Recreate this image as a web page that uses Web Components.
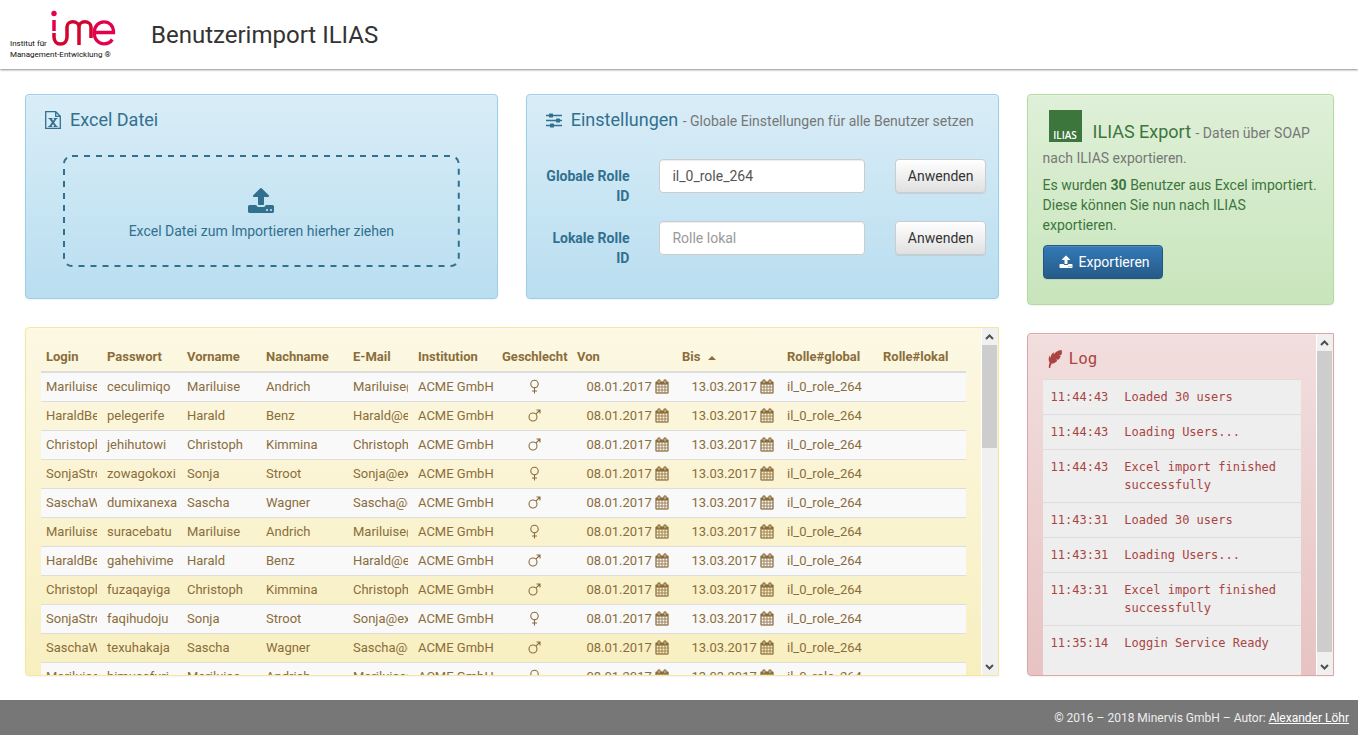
<!DOCTYPE html>
<html lang="de">
<head>
<meta charset="utf-8">
<title>Benutzerimport ILIAS</title>
<style>
html,body{margin:0;height:100%}
body{font:14px/20px Roboto,"Liberation Sans",sans-serif;color:#333;background:#fff}
</style>
</head>
<body>
<import-app></import-app>
<script>
const define = (name, html, setup) => customElements.define(name, class extends HTMLElement {
  constructor() {
    super();
    this.attachShadow({mode: 'open'});
  }
  connectedCallback() {
    if (this._ready) return;
    this._ready = true;
    const tpl = document.createElement('template');
    tpl.innerHTML = '<style>*{box-sizing:border-box}</style>' + (typeof html === 'function' ? html(this) : html);
    this.shadowRoot.append(tpl.content.cloneNode(true));
    if (setup) setup(this, this.shadowRoot);
  }
});

/* Icons */
const stroke = (w, d) => `<path d="${d}" fill="none" stroke="currentColor" stroke-width="${w}"/>`;
const ICONS = {
  upload: ['0 0 1792 1792', '<path d="M1344 1472q0-26-19-45t-45-19-45 19-19 45 19 45 45 19 45-19 19-45zm256 0q0-26-19-45t-45-19-45 19-19 45 19 45 45 19 45-19 19-45zm128-224v320q0 40-28 68t-68 28h-1472q-40 0-68-28t-28-68v-320q0-40 28-68t68-28h427q21 56 70.500 92t110.500 36h256q61 0 110.500-36t70.500-92h427q40 0 68 28t28 68zm-325-648q-17 40-59 40h-256v448q0 26-19 45t-45 19h-256q-26 0-45-19t-19-45v-448h-256q-42 0-59-40-17-39 14-69l448-448q18-19 45-19t45 19l448 448q31 30 14 69z"/>'],
  calendar: ['0 0 1792 1792', '<path d="M192 1664h288v-288h-288v288zm352 0h320v-288h-320v288zm-352-352h288v-320h-288v320zm352 0h320v-320h-320v320zm-352-384h288v-288h-288v288zm736 736h320v-288h-320v288zm-384-736h320v-288h-320v288zm768 736h288v-288h-288v288zm-384-352h320v-320h-320v320zm-352-864v-288q0-13-9.500-22.500t-22.500-9.500h-64q-13 0-22.500 9.500t-9.500 22.500v288q0 13 9.500 22.500t22.500 9.500h64q13 0 22.500-9.500t9.500-22.500zm736 864h288v-320h-288v320zm-384-384h320v-288h-320v288zm384 0h288v-288h-288v288zm32-480v-288q0-13-9.500-22.500t-22.500-9.500h-64q-13 0-22.500 9.500t-9.500 22.500v288q0 13 9.500 22.500t22.500 9.500h64q13 0 22.500-9.500t9.500-22.500zm384-64v1280q0 52-38 90t-90 38h-1408q-52 0-90-38t-38-90v-1280q0-52 38-90t90-38h128v-96q0-66 47-113t113-47h64q66 0 113 47t47 113v96h384v-96q0-66 47-113t113-47h64q66 0 113 47t47 113v96h128q52 0 90 38t38 90z" stroke="currentColor" stroke-width="30"/>'],
  excel: ['0 0 18 20', stroke(1.3, 'M1.700 1.700h10l4.600 4.600v12h-14.600zM11.700 1.700v4.600h4.600') + '<path d="M4.500 8h4v1h-.6l1.200 1.900L10.300 9H9.700V8h3.800v1h-.9l-2.500 3.400 2.600 3.600h.9v1H9.700v-1h.7L9 13.900 7.600 16h.6v1H4.300v-1h.9l2.700-3.600L5.400 9h-.9z"/>'],
  sliders: ['0 0 18 18', stroke(1.4, 'M1 4.500h16M1 9.500h16M1 14.500h16') + '<rect x="4" y="2.500" width="4" height="4" rx=".6"/><rect x="11" y="7.500" width="4" height="4" rx=".6"/><rect x="5" y="12.500" width="4" height="4" rx=".6"/>'],
  feather: ['0 0 14 18', '<path d="M.9 17.900C.7 15.600 1 14.400 1.700 13 .3 10.500.4 8 1.600 5.600l.8 2.600C2.700 5.200 4 3.400 5.900 2.300l0 2.300C7.300 1.900 9.800.3 13.500 0c.7 1.700.5 3.500-.2 5l-2.400.2 1.900.7c-.6 1.700-1.500 3-2.700 3.900l-2.300-.3 1.500 1.100c-1.300 1.700-2.700 2.600-4.900 3.100l-1-1 .3 1.300c-.8 1.100-1.500 2.400-1.400 3.900z"/>'],
  venus: ['0 0 14 14', '<circle cx="6.500" cy="4.500" r="3.700" fill="none" stroke="currentColor" stroke-width="1.100"/>' + stroke(1.1, 'M6.500 8v6M4 11.500h5')],
  mars: ['0 0 14 14', '<circle cx="5" cy="8.500" r="4" fill="none" stroke="currentColor" stroke-width="1.100"/>' + stroke(1.1, 'M7.900 5.600 12 1.500M8.500 1.500H12V5')]
};
define('ui-icon', el => {
  const [box, body] = ICONS[el.getAttribute('name')];
  return `<style>:host{display:inline-block;flex:none;width:14px;height:14px}svg{display:block;width:100%;height:100%}</style>
  <svg viewBox="${box}" fill="currentColor" aria-hidden="true">${body}</svg>`;
});

/* Coloured panel, with an optional scroll column */
define('ui-panel', el => {
  const scroll = el.hasAttribute('scroll');
  return `<style>
  :host{display:flex;min-width:0;overflow:hidden;border:1px solid var(--edge);border-radius:4px;color:var(--ink);
    background:linear-gradient(var(--from),var(--to));box-shadow:inset 0 1px 0 rgba(255,255,255,.25),0 1px 2px rgba(0,0,0,.05);box-sizing:border-box}
  :host([tone=info]){--ink:#31708f;--edge:#9acfea;--from:#d9edf7;--to:#b9def0}
  :host([tone=success]){--ink:#3c763d;--edge:#b2dba1;--from:#dff0d8;--to:#c8e5bc}
  :host([tone=warning]){--ink:#8a6d3b;--edge:#f5e79e;--from:#fcf8e3;--to:#f8efc0}
  :host([tone=danger]){--ink:#a94442;--edge:#dca7a7;--from:#f2dede;--to:#e7c3c3}
  :host([scroll]){border-radius:4px 0 0 4px}
  .view{flex:1;min-width:0;padding:15px}
  :host([scroll]) .view{overflow-y:auto;scrollbar-width:none}
  .bar{flex:none;display:flex;flex-direction:column;width:17px;background:#f0f0f0;border-left:1px solid #fff;padding-right:1px}
  button{display:grid;place-items:center;flex:none;height:17px;border:0;padding:0;background:none;color:#505050}
  button svg{width:9px;height:6px}
  .track{flex:1}
  .thumb{height:var(--thumb,50%);background:#cdcdcd}
  </style>
  <div class="view"><slot></slot></div>${scroll ? `<div class="bar">
    <button type="button" aria-label="Nach oben"><svg viewBox="0 0 9 6"><path d="M1 5 4.500 1.500 8 5" fill="none" stroke="currentColor" stroke-width="2"/></svg></button>
    <div class="track"><div class="thumb"></div></div>
    <button type="button" aria-label="Nach unten"><svg viewBox="0 0 9 6"><path d="M1 1 4.500 4.500 8 1" fill="none" stroke="currentColor" stroke-width="2"/></svg></button>
  </div>` : ''}`;
}, (el, root) => {
  const view = root.querySelector('.view');
  root.querySelectorAll('button').forEach((b, i) => b.addEventListener('click', () => view.scrollBy(0, i ? 40 : -40)));
});

define('panel-title', `<style>
  :host{display:block}
  h4{margin:0;font-size:var(--title-size,18px);line-height:var(--title-line,20px);font-weight:400}
  ::slotted(small){font-size:14px;color:#777}
  </style><h4><slot name="icon"></slot><slot></slot></h4>`);

define('ime-logo', `<style>:host{display:block;width:116px;height:60px}svg{display:block;width:100%;height:100%}text{font:8px Roboto,"Liberation Sans",sans-serif;fill:#111}</style>
  <svg viewBox="0 0 116 60" role="img" aria-label="ime">
    <circle cx="54" cy="13.500" r="2.700" fill="#e4004f"/>
    <path d="M54 20v11" stroke="#e4004f" stroke-width="3.500" fill="none"/>
    <path d="M54 33v4c0 4 2.500 7 6.500 7s6.500-3 6.500-7V27c0-3 2.500-5.200 5.800-5.200S79 24 79 27v18M79 27c0-3 2.500-5.200 5.800-5.200S91 24 91 27v11" stroke="#d2052f" stroke-width="3.500" fill="none"/>
    <path d="M94 32.500h19.500c0-6.500-4-10.700-9.500-10.700s-9.800 4.700-9.800 11 4 11 9.800 11c3.800 0 6.600-1.600 8.300-4.300" stroke="#e4004f" stroke-width="3.300" fill="none"/>
    <text x="10" y="46">Institut für</text>
    <text x="10" y="57">Management-Entwicklung ®</text>
  </svg>`);

define('app-header', `<style>
  :host{display:flex;align-items:center;gap:35px;height:69px;flex:none;background:#fff;box-shadow:0 1px 2px rgba(0,0,0,.45)}
  ime-logo{align-self:flex-start}
  h1{margin:0;font-size:24px;line-height:26px;font-weight:400}
  </style><ime-logo></ime-logo><h1><slot></slot></h1>`);

define('file-drop', `<style>
  :host{display:block;margin:25px 22px 16px}
  label{position:relative;display:flex;flex-direction:column;align-items:center;justify-content:center;gap:6px;height:112px;padding-top:6px;cursor:pointer;text-align:center}
  ui-icon{width:28px;height:28px}
  input{position:absolute;width:1px;height:1px;opacity:0}
  .edge{position:absolute;inset:0;width:100%;height:100%}
  .edge rect{x:1px;y:1px;width:calc(100% - 2px);height:calc(100% - 2px);rx:8px;fill:none;stroke:currentColor;stroke-width:2px;stroke-dasharray:6 6}
  </style><label><svg class="edge" aria-hidden="true"><rect/></svg><input type="file"><ui-icon name="upload"></ui-icon><span><slot></slot></span></label>`);

const BUTTON = `button{display:inline-flex;align-items:center;justify-content:center;gap:6px;height:34px;padding:0 12px;font:inherit;border-radius:4px;cursor:pointer;border:1px solid #ccc;color:#333;
  background:linear-gradient(#fff,#e0e0e0);box-shadow:inset 0 1px 0 rgba(255,255,255,.15),0 1px 1px rgba(0,0,0,.075)}
  button.primary{border-color:#245580;color:#fff;background:linear-gradient(#337ab7,#265a88);padding:0 12px 0 15px}`;

define('role-field', el => `<style>
  :host{display:grid;grid-template-columns:minmax(0,1fr) minmax(0,2fr) minmax(0,1fr);align-items:start;margin:0 -15px}
  label,div{padding:0 15px}
  label{padding-top:7px;font-weight:700;text-align:right}
  input{width:100%;height:34px;padding:6px 12px;font:inherit;color:#555;background:#fff;border:1px solid #ccc;border-radius:4px;box-shadow:inset 0 1px 1px rgba(0,0,0,.075)}
  input::placeholder{color:#999}
  ${BUTTON}
  </style>
  <label for="role">${el.getAttribute('label')}</label>
  <div><input id="role" type="text" value="${el.getAttribute('value') || ''}" placeholder="${el.getAttribute('placeholder') || ''}"></div>
  <div><button type="button">Anwenden</button></div>`);

define('export-button', `<style>:host{display:block;margin:10px 0}${BUTTON}</style>
  <button type="button" class="primary"><ui-icon name="upload"></ui-icon><slot></slot></button>`);

define('ilias-badge', `<style>
  :host{display:inline-flex;align-items:flex-end;justify-content:center;vertical-align:text-bottom;box-sizing:border-box;width:33px;height:32px;margin:0 11px 0 6px;padding-bottom:2px;background:#3c763d;color:#fff;font:600 10px/10px "Open Sans","Liberation Sans",sans-serif}
  </style>ILIAS`);

const USERS = [
  ['MariluiseAndrich', 'ceculimiqo', 'Mariluise', 'Andrich', 'f'],
  ['HaraldBenz', 'pelegerife', 'Harald', 'Benz', 'm'],
  ['ChristophKimmina', 'jehihutowi', 'Christoph', 'Kimmina', 'm'],
  ['SonjaStroot', 'zowagokoxi', 'Sonja', 'Stroot', 'f'],
  ['SaschaWagner', 'dumixanexa', 'Sascha', 'Wagner', 'm'],
  ['MariluiseAndrich', 'suracebatu', 'Mariluise', 'Andrich', 'f'],
  ['HaraldBenz', 'gahehivime', 'Harald', 'Benz', 'm'],
  ['ChristophKimmina', 'fuzaqayiga', 'Christoph', 'Kimmina', 'm'],
  ['SonjaStroot', 'faqihudoju', 'Sonja', 'Stroot', 'f'],
  ['SaschaWagner', 'texuhakaja', 'Sascha', 'Wagner', 'm'],
  ['MariluiseAndrich', 'himusafuri', 'Mariluise', 'Andrich', 'f']
];
const WIDTHS = [61, 80, 79, 87, 65, 84, 75, 105, 105, 96, 88];
const HEADS = ['Login', 'Passwort', 'Vorname', 'Nachname', 'E-Mail', 'Institution', 'Geschlecht', 'Von', 'Bis', 'Rolle#global', 'Rolle#lokal'];
const cell = t => `<td>${t}</td>`;
const cut = t => `<td><div>${t}</div></td>`;
const date = t => `<td class="date">${t} <ui-icon name="calendar"></ui-icon></td>`;
define('user-table', () => `<style>
  :host{display:block}
  table{width:100%;table-layout:fixed;border-collapse:separate;border-spacing:0;font-size:13px;line-height:18px}
  th,td{padding:5px;text-align:left;white-space:nowrap}
  th{font-weight:700;border-bottom:2px solid #ddd}
  td{border-bottom:1px solid #ddd;height:29px}
  td div{overflow:hidden}
  tbody tr:nth-child(odd){background:#f9f9f9}
  td.sex{text-align:center}
  td.date{text-align:right;padding-right:8px}
  ui-icon{vertical-align:text-bottom;height:15px}
  .up{display:inline-block;margin-left:4px;border:4px solid transparent;border-top:0;border-bottom-color:currentColor;vertical-align:middle}
  </style>
  <table><colgroup>${WIDTHS.map(w => `<col style="width:${w}px">`).join('')}</colgroup>
  <thead><tr>${HEADS.map(h => `<th scope="col">${h}${h === 'Bis' ? ' <span class="up"></span>' : ''}</th>`).join('')}</tr></thead>
  <tbody>${USERS.map(([login, pass, first, last, sex]) => `<tr>${cut(login)}${cell(pass)}${cell(first)}${cell(last)}${cut(first + '@example.com')}${cell('ACME GmbH')}
    <td class="sex"><ui-icon name="${sex === 'f' ? 'venus' : 'mars'}"></ui-icon></td>${date('08.01.2017')}${date('13.03.2017')}${cell('il_0_role_264')}${cell('')}</tr>`).join('')}</tbody></table>`);

const LOG = [
  ['11:44:43', 'Loaded 30 users'], ['11:44:43', 'Loading Users...'], ['11:44:43', 'Excel import finished successfully'],
  ['11:43:31', 'Loaded 30 users'], ['11:43:31', 'Loading Users...'], ['11:43:31', 'Excel import finished successfully'],
  ['11:35:14', 'Loggin Service Ready']
];
define('log-table', () => `<style>
  :host{display:block;margin-top:10px}
  table{width:100%;border-spacing:0;background:#eee;font-size:12px;line-height:18px}
  td{padding:8px;vertical-align:top;border-top:1px solid #ddd}
  td:first-child{width:72px}
  tr:last-child td{padding-bottom:26px}
  </style>
  <table><tbody>${LOG.map(([t, m]) => `<tr><td>${t}</td><td>${m}</td></tr>`).join('')}</tbody></table>`);

define('app-footer', `<style>
  :host{display:flex;align-items:center;justify-content:flex-end;flex:none;height:35px;padding:0 9px;background:#777;color:#fff;font-size:12px;box-sizing:border-box}
  a{color:#fff;text-decoration:underline}
  p{margin:0;color:#eee}
  </style><p>© 2016 – 2018 Minervis GmbH – Autor: <a href="#autor">Alexander Löhr</a></p>`);

define('import-app', `<style>
  :host{display:flex;flex-direction:column;height:100vh;min-height:560px}
  main{flex:1;min-height:0;display:grid;grid-template-columns:minmax(0,19fr) minmax(0,6fr);grid-template-rows:minmax(0,1fr);gap:28px;padding:25px 24px 24px 25px}
  section{display:flex;flex-direction:column;gap:28px;min-height:0}
  .top{display:grid;grid-template-columns:minmax(0,1fr) minmax(0,1fr);gap:28px;flex:none}
  .fill{flex:1;min-height:0}
  .users{--thumb:33%}
  .log{--thumb:98%;--title-size:16px;font-family:"DejaVu Sans Mono","Liberation Mono",monospace}
  .export{--title-line:24px}
  .pic{width:18px;height:20px;vertical-align:text-bottom;margin:0 8px 0 3px}
  .log .pic{width:14px;height:18px;margin:0 7px 0 5px}
  form{display:grid;gap:15px;margin-top:28px}
  p{margin:5px 0 0}
  </style>
  <app-header>Benutzerimport ILIAS</app-header>
  <main>
    <section>
      <div class="top">
        <ui-panel tone="info">
          <panel-title><ui-icon class="pic" slot="icon" name="excel"></ui-icon>Excel Datei</panel-title>
          <file-drop>Excel Datei zum Importieren hierher ziehen</file-drop>
        </ui-panel>
        <ui-panel tone="info">
          <panel-title><ui-icon class="pic" slot="icon" name="sliders"></ui-icon>Einstellungen <small>- Globale Einstellungen für alle Benutzer setzen</small></panel-title>
          <form>
            <role-field label="Globale Rolle ID" value="il_0_role_264"></role-field>
            <role-field label="Lokale Rolle ID" placeholder="Rolle lokal"></role-field>
          </form>
        </ui-panel>
      </div>
      <ui-panel class="fill users" tone="warning" scroll><user-table></user-table></ui-panel>
    </section>
    <section>
      <ui-panel class="export" tone="success">
        <panel-title><ilias-badge slot="icon"></ilias-badge>ILIAS Export <small>- Daten über SOAP nach ILIAS exportieren.</small></panel-title>
        <p>Es wurden <b>30</b> Benutzer aus Excel importiert. Diese können Sie nun nach ILIAS exportieren.</p>
        <export-button>Exportieren</export-button>
      </ui-panel>
      <ui-panel class="fill log" tone="danger" scroll>
        <panel-title><ui-icon class="pic" slot="icon" name="feather"></ui-icon>Log</panel-title>
        <log-table></log-table>
      </ui-panel>
    </section>
  </main>
  <app-footer></app-footer>`);
</script>
</body>
</html>
